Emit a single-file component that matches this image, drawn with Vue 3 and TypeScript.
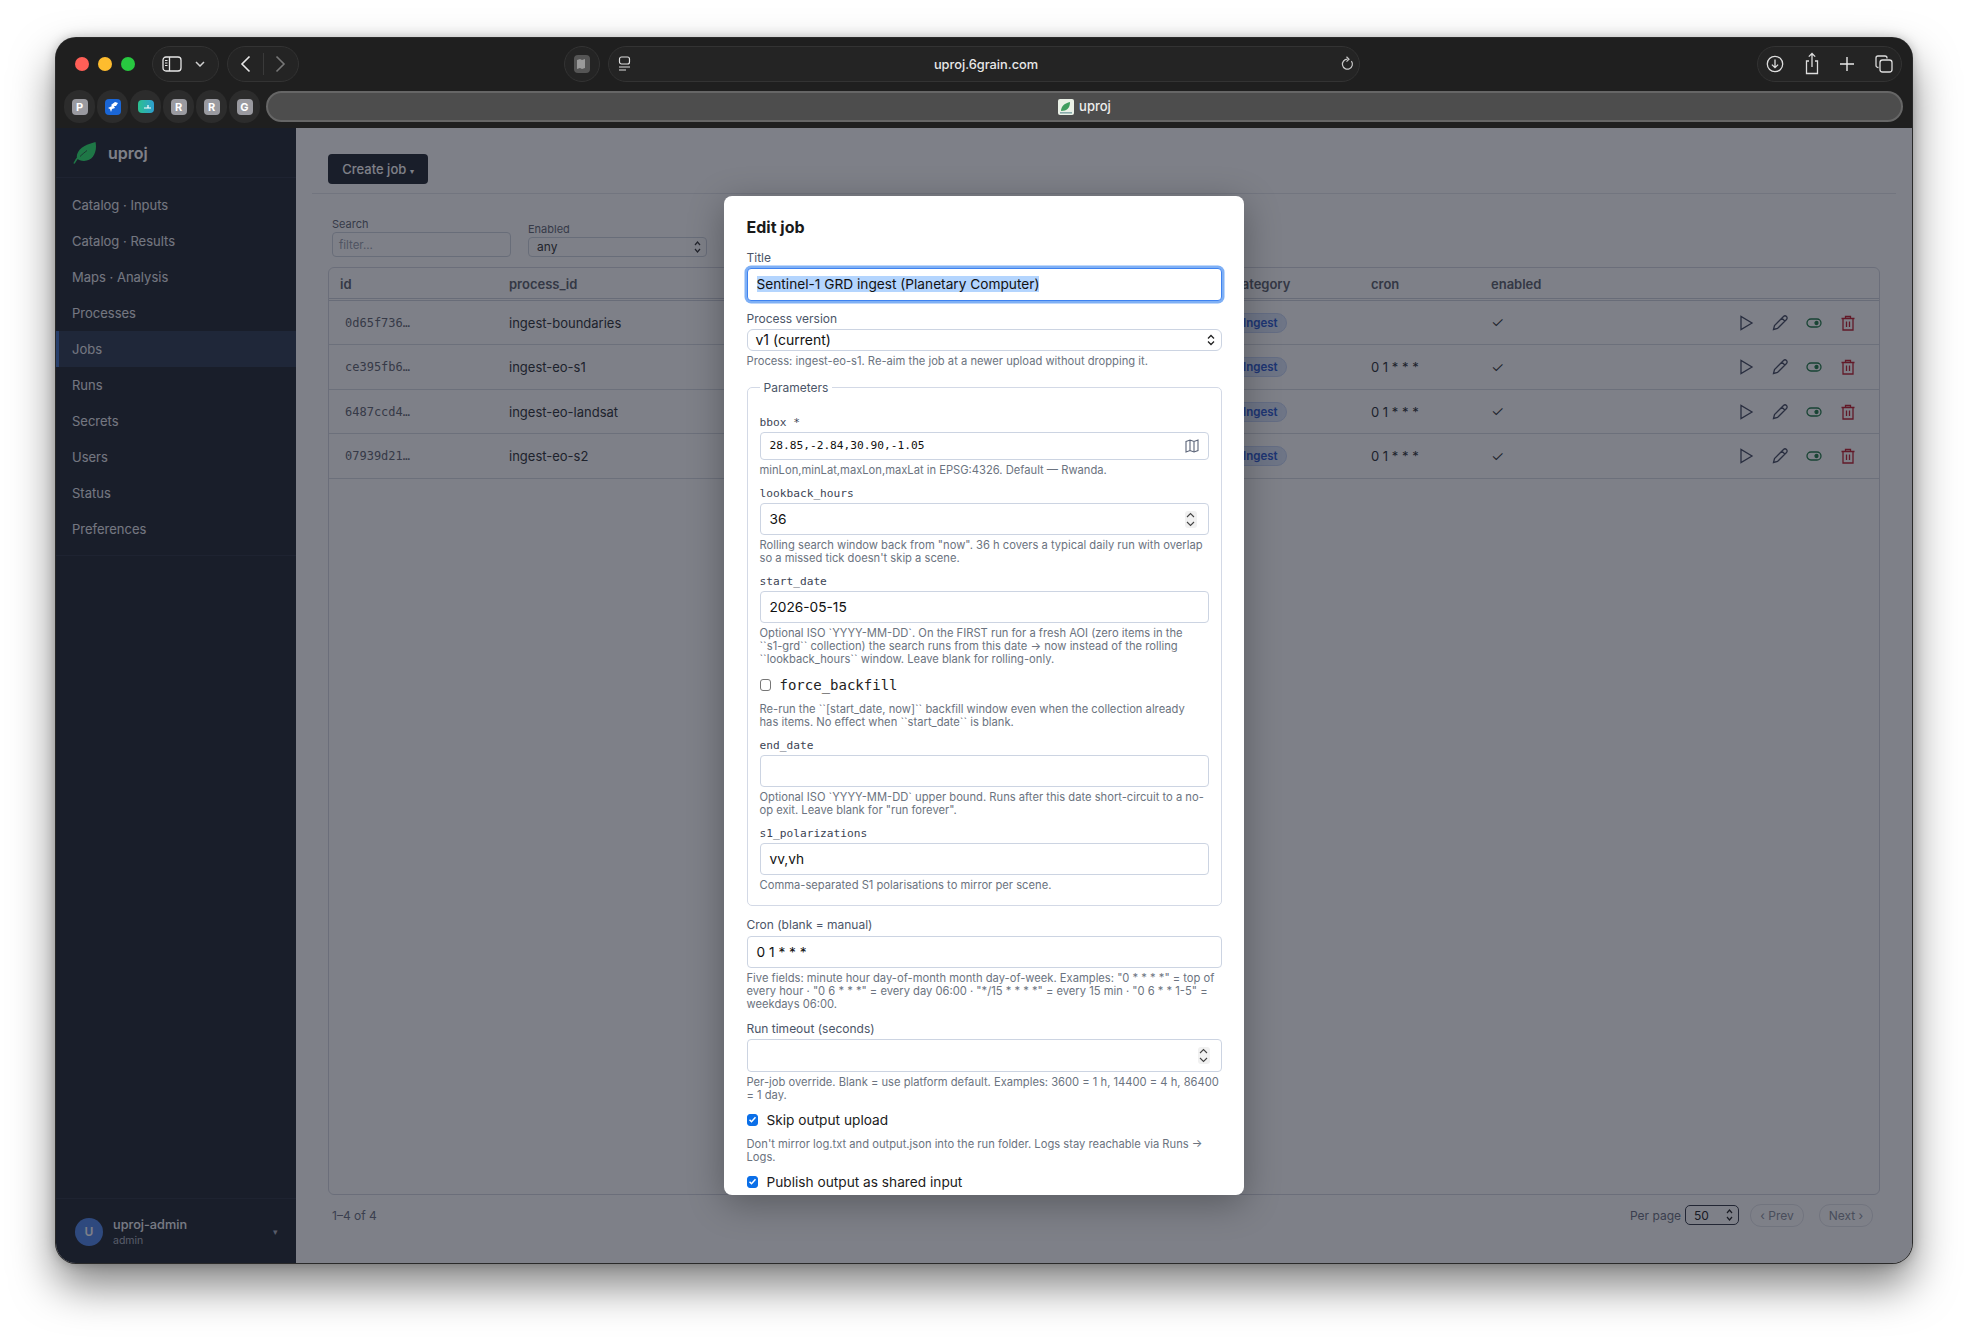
<script setup lang="ts">
interface Job { id: string; process: string; cron: string }
const nav: string[] = ['Catalog · Inputs', 'Catalog · Results', 'Maps · Analysis', 'Processes', 'Jobs', 'Runs', 'Secrets', 'Users', 'Status', 'Preferences']
const jobs: Job[] = [
  { id: '0d65f736…', process: 'ingest-boundaries', cron: '' },
  { id: 'ce395fb6…', process: 'ingest-eo-s1', cron: '0 1 * * *' },
  { id: '6487ccd4…', process: 'ingest-eo-landsat', cron: '0 1 * * *' },
  { id: '07939d21…', process: 'ingest-eo-s2', cron: '0 1 * * *' },
]
const tabs: string[] = ['P', '', '', 'R', 'R', 'G']
</script>

<template>
  <div class="page">
    <div class="window">
      <header class="chrome">
        <div class="row-top">
          <div class="lights"><i class="l red"></i><i class="l yellow"></i><i class="l green"></i></div>
          <div class="pill pill-side">
            <svg width="20" height="16" viewBox="0 0 20 16" fill="none" stroke="#e6e6e6" stroke-width="1.3"><rect x="1" y="1" width="18" height="14" rx="3"/><path d="M7.5 1v14"/><path d="M3 4.5h2.5M3 7h2.5M3 9.5h2.5" stroke-width="1"/></svg>
            <svg width="10" height="6" viewBox="0 0 10 6" fill="none" stroke="#d0d0d0" stroke-width="1.5"><path d="M1 1l4 4 4-4"/></svg>
          </div>
          <div class="pill pill-nav">
            <svg width="11" height="18" viewBox="0 0 11 18" fill="none" stroke="#e8e8e8" stroke-width="1.6"><path d="M9.5 1.5L2 9l7.5 7.5"/></svg>
            <span class="sep"></span>
            <svg width="11" height="18" viewBox="0 0 11 18" fill="none" stroke="#777" stroke-width="1.6"><path d="M1.5 1.5L9 9l-7.5 7.5"/></svg>
          </div>
          <div class="pill pill-reader"><span class="reader-ico"><svg width="10" height="10" viewBox="0 0 10 10" fill="#9a9a9a"><path d="M0 1l3-1 2 1 3-1v9l-3 1-2-1-3 1z"/></svg></span></div>
          <div class="pill address">
            <svg class="addr-left" width="13" height="16" viewBox="0 0 13 16" fill="none" stroke="#ddd" stroke-width="1.2"><rect x="1.5" y="1" width="10" height="7" rx="2"/><path d="M1 11h11M1 14h7"/></svg>
            <span class="url">uproj.6grain.com</span>
            <svg class="addr-right" width="13" height="16" viewBox="0 0 13 16" fill="none" stroke="#c8c8c8" stroke-width="1.2"><path d="M10.4 5.2A5 5 0 1 1 6.5 3.2"/><path d="M5.5 0.8L8 3.2 5.5 5.6" /></svg>
          </div>
          <div class="pill tools">
            <svg width="18" height="18" viewBox="0 0 18 18" fill="none" stroke="#ddd" stroke-width="1.3"><circle cx="9" cy="9" r="7.7"/><path d="M9 4.5v8M5.9 9.6L9 12.7l3.1-3.1"/></svg>
            <svg width="16" height="24" viewBox="0 0 16 24" fill="none" stroke="#ddd" stroke-width="1.3"><path d="M5 9H2.5v12.5h11V9H11"/><path d="M8 15V1.5M4.8 4.6L8 1.5l3.2 3.1"/></svg>
            <svg width="16" height="16" viewBox="0 0 16 16" fill="none" stroke="#e8e8e8" stroke-width="1.4"><path d="M8 1v14M1 8h14"/></svg>
            <svg width="18" height="18" viewBox="0 0 18 18" fill="none" stroke="#ddd" stroke-width="1.3"><rect x="5" y="5" width="12" height="12" rx="2.5"/><path d="M3.5 12.5H3a2 2 0 0 1-2-2V3a2 2 0 0 1 2-2h7a2 2 0 0 1 2 2v.5"/></svg>
          </div>
        </div>
        <div class="row-tabs">
          <div v-for="(t, i) in tabs" :key="i" class="tab">
            <span class="fav" :class="{ blue: i === 1, teal: i === 2 }">{{ t }}<svg v-if="i === 1" width="12" height="12" viewBox="0 0 12 12" fill="#fff"><path d="M1 7l4-2-1-1 4-3 3 1-2 3h-2l1 2-3 1-1 3-1-3z"/></svg><svg v-if="i === 2" width="12" height="8" viewBox="0 0 12 8" fill="none" stroke="#fff" stroke-width="1.2"><path d="M4 5h7M8 2v3"/></svg></span>
          </div>
          <div class="tabbar">
            <svg width="16" height="16" viewBox="0 0 16 16"><rect width="16" height="16" rx="2" fill="#e9f0e6"/><path d="M3 12c0-5 4-8 9-9 0 6-3 9-9 9z" fill="#3f9d5f"/><rect x="2" y="13" width="12" height="1.6" fill="#8aa"/></svg>
            <span>uproj</span>
          </div>
        </div>
      </header>

      <div class="app">
        <aside class="sidebar">
          <div class="brand">
            <svg width="24" height="22" viewBox="0 0 24 22"><path d="M22.500 0C24.500 10 20 19 11 19 8 19 5.500 18 4 16.500 2.500 9 10 3 22.500 0z" fill="#2cec6e"/><path d="M1 21.500C4 15.500 8 11.500 14 8.500" fill="none" stroke="#2cec6e" stroke-width="1.500"/><path d="M7 14.500C9.500 12 11.500 10.500 14 8.500" fill="none" stroke="#21262f" stroke-width=".7"/></svg>
            <span>uproj</span>
          </div>
          <nav class="nav">
            <a v-for="n in nav" :key="n" class="nav-item" :class="{ active: n === 'Jobs' }">{{ n }}</a>
          </nav>
          <div class="user">
            <span class="avatar">U</span>
            <div class="who"><div class="name">uproj-admin</div><div class="role">admin</div></div>
            <span class="caret">▾</span>
          </div>
        </aside>

        <main class="main">
          <div class="head"><button class="create">Create job <small>▾</small></button></div>
          <div class="filters">
            <div class="filter">
              <div class="f-label">Search</div>
              <div class="f-input">filter...</div>
            </div>
            <div class="filter">
              <div class="f-label">Enabled</div>
              <div class="f-select">any
                <svg width="7" height="12" viewBox="0 0 7 12" fill="none" stroke="#333" stroke-width="1.2"><path d="M1 4l2.500-3L6 4M1 8l2.500 3L6 8"/></svg>
              </div>
            </div>
          </div>
          <section class="table">
            <div class="tr th">
              <span>id</span><span>process_id</span><span>category</span><span>cron</span><span>enabled</span><span></span>
            </div>
            <div v-for="j in jobs" :key="j.id" class="tr">
              <span class="mono">{{ j.id }}</span>
              <span>{{ j.process }}</span>
              <span><b class="badge">Ingest</b></span>
              <span>{{ j.cron }}</span>
              <span class="check">✓</span>
              <span class="actions">
                <svg width="16" height="16" viewBox="0 0 16 16" fill="none" stroke="#444b60" stroke-width="1.300"><path d="M3 1.500v13L14 8z"/></svg>
                <svg width="16" height="16" viewBox="0 0 16 16" fill="none" stroke="#444b60" stroke-width="1.300"><path d="M1.500 14.500l1-4L11.500 1.500a1.800 1.800 0 0 1 3 3L5.500 13.500zM10 3.200l2.800 2.800"/></svg>
                <svg width="16" height="16" viewBox="0 0 16 16" fill="none" stroke="#1f7a45" stroke-width="1.300"><rect x="1" y="4" width="14" height="8" rx="4"/><circle cx="10.500" cy="8" r="1.500" fill="#1f7a45"/></svg>
                <svg width="16" height="16" viewBox="0 0 16 16" fill="none" stroke="#c01c2c" stroke-width="1.300"><path d="M1.500 3.500h13M5.500 3.500V1.500h5v2M3 3.500v11.500h10V3.500M6.500 6.500v5.500M9.500 6.500v5.500"/></svg>
              </span>
            </div>
          </section>
          <footer class="pager">
            <span class="count">1–4 of 4</span>
            <span class="per">Per page</span>
            <div class="per-select">50
              <svg width="7" height="12" viewBox="0 0 7 12" fill="none" stroke="#222" stroke-width="1.2"><path d="M1 4l2.500-3L6 4M1 8l2.500 3L6 8"/></svg>
            </div>
            <button class="pg prev">‹ Prev</button>
            <button class="pg">Next ›</button>
          </footer>
        </main>

        <div class="overlay">
          <div class="modal">
            <h2>Edit job</h2>
            <div class="field title-field">
              <div class="lbl">Title</div>
              <div class="input focus"><span class="sel">Sentinel-1 GRD ingest (Planetary Computer)</span></div>
            </div>
            <div class="field">
              <div class="lbl">Process version</div>
              <div class="input select">v1 (current)
                <svg class="ud" width="8" height="12" viewBox="0 0 8 12" fill="none" stroke="#222" stroke-width="1.300"><path d="M1 4.500L4 1.500l3 3M1 7.500l3 3 3-3"/></svg>
              </div>
              <div class="hint">Process: ingest-eo-s1. Re-aim the job at a newer upload without dropping it.</div>
            </div>
            <fieldset class="params">
              <legend>Parameters</legend>
              <div class="pf">
                <div class="mlbl">bbox *</div>
                <div class="input bbox">28.85,-2.84,30.90,-1.05
                  <svg class="map" width="14" height="14" viewBox="0 0 14 14" fill="none" stroke="#5b6478" stroke-width="1.100"><path d="M1 2.500l4-1.500 4 1.500 4-1.500v10.500l-4 1.500-4-1.500-4 1.500zM5 1v10.500M9 2.500V13"/></svg>
                </div>
                <div class="hint">minLon,minLat,maxLon,maxLat in EPSG:4326. Default — Rwanda.</div>
              </div>
              <div class="pf">
                <div class="mlbl">lookback_hours</div>
                <div class="input">36
                  <span class="spin"><svg width="9" height="15" viewBox="0 0 9 15" fill="none" stroke="#444" stroke-width="1.100"><path d="M1 5l3.500-3.500L8 5M1 10l3.500 3.500L8 10"/></svg></span>
                </div>
                <div class="hint">Rolling search window back from "now". 36 h covers a typical daily run with overlap so a missed tick doesn't skip a scene.</div>
              </div>
              <div class="pf">
                <div class="mlbl">start_date</div>
                <div class="input">2026-05-15</div>
                <div class="hint">Optional ISO `YYYY-MM-DD`. On the FIRST run for a fresh AOI (zero items in the ``s1-grd`` collection) the search runs from this date → now instead of the rolling ``lookback_hours`` window. Leave blank for rolling-only.</div>
              </div>
              <div class="pf">
                <div class="checkrow"><span class="box"></span><span class="mcheck">force_backfill</span></div>
                <div class="hint after">Re-run the ``[start_date, now]`` backfill window even when the collection already<br>has items. No effect when ``start_date`` is blank.</div>
              </div>
              <div class="pf">
                <div class="mlbl">end_date</div>
                <div class="input"></div>
                <div class="hint">Optional ISO `YYYY-MM-DD` upper bound. Runs after this date short-circuit to a no-op exit. Leave blank for "run forever".</div>
              </div>
              <div class="pf">
                <div class="mlbl">s1_polarizations</div>
                <div class="input">vv,vh</div>
                <div class="hint">Comma-separated S1 polarisations to mirror per scene.</div>
              </div>
            </fieldset>
            <div class="field">
              <div class="lbl">Cron (blank = manual)</div>
              <div class="input">0 1 * * *</div>
              <div class="hint">Five fields: minute hour day-of-month month day-of-week. Examples: "0 * * * *" = top of every hour · "0 6 * * *" = every day 06:00 · "*/15 * * * *" = every 15 min · "0 6 * * 1-5" = weekdays 06:00.</div>
            </div>
            <div class="field timeout">
              <div class="lbl">Run timeout (seconds)</div>
              <div class="input">
                <span class="spin"><svg width="9" height="15" viewBox="0 0 9 15" fill="none" stroke="#444" stroke-width="1.100"><path d="M1 5l3.500-3.500L8 5M1 10l3.500 3.500L8 10"/></svg></span>
              </div>
              <div class="hint">Per-job override. Blank = use platform default. Examples: 3600 = 1 h, 14400 = 4 h, 86400 = 1 day.</div>
            </div>
            <div class="checkrow">
              <span class="box on"><svg width="9" height="9" viewBox="0 0 9 9" fill="none" stroke="#fff" stroke-width="1.500"><path d="M1.500 4.700l2 2 4-4.500"/></svg></span>
              <span class="tcheck">Skip output upload</span>
            </div>
            <div class="hint after">Don't mirror log.txt and output.json into the run folder. Logs stay reachable via Runs → Logs.</div>
            <div class="checkrow last">
              <span class="box on"><svg width="9" height="9" viewBox="0 0 9 9" fill="none" stroke="#fff" stroke-width="1.500"><path d="M1.500 4.700l2 2 4-4.500"/></svg></span>
              <span class="tcheck">Publish output as shared input</span>
            </div>
          </div>
        </div>
      </div>
    </div>
  </div>
</template>

<style>
html, body { margin: 0; background: #fff; }
</style>

<style scoped>
* { box-sizing: border-box; }
.page { width: 1968px; height: 1337px; padding: 38px 56px 74px; font-family: Inter, "Liberation Sans", sans-serif; background: #fff; overflow: hidden; }
.window { height: 100%; border-radius: 20px; overflow: hidden; display: flex; flex-direction: column; box-shadow: 0 0 0 1px #2a2a2a, 0 22px 44px rgba(0,0,0,.5), 0 0 12px rgba(0,0,0,.25); background: #1f1f1f; }
.chrome { height: 90px; flex: none; background: #1f1f1f; color: #ddd; padding-top: 8px; }
.row-top { display: flex; align-items: center; height: 36px; padding-right: 10px; }
.lights { display: flex; gap: 9px; margin-left: 19px; margin-right: 17px; }
.l { width: 14px; height: 14px; border-radius: 50%; display: block; }
.red { background: #ff5f57; } .yellow { background: #febc2e; } .green { background: #28c840; }
.pill { height: 36px; border-radius: 18px; border: 1px solid #333; display: flex; align-items: center; background: #242424; }
.pill-side { width: 67px; padding: 0 13px 0 9px; justify-content: space-between; margin-right: 8px; }
.pill-nav { width: 72px; justify-content: space-between; padding: 0 12px; }
.sep { width: 1px; height: 22px; background: #3a3a3a; }
.pill-reader { width: 36px; justify-content: center; margin-left: 265px; margin-right: 8px; }
.reader-ico { width: 16px; height: 18px; border-radius: 4px; background: #555; display: flex; align-items: center; justify-content: center; }
.address { width: 752px; position: relative; justify-content: space-between; padding: 0 5px 0 9px; }
.url { font-size: 12.800px; font-weight: 500; color: #e8e8e8; }
.tools { width: 145px; margin-left: auto; padding: 0 8px; justify-content: space-between; }
.row-tabs { display: flex; align-items: center; margin-top: 8px; height: 33px; padding-left: 8px; }
.tab { width: 31px; height: 33px; margin-right: 2px; border-radius: 16px; background: #2c2c2c; display: flex; align-items: center; justify-content: center; }
.fav { width: 16px; height: 16px; border-radius: 4px; background: #9a9aa0; color: #fff; font-size: 11px; font-weight: 700; display: flex; align-items: center; justify-content: center; }
.fav.blue { background: #1a66d6; }
.fav.teal { background: linear-gradient(90deg, #2bc08f, #2e9fd0); height: 13px; }
.tabbar { margin-left: 4px; width: 1637px; height: 31px; border-radius: 16px; background: #4d4d4d; border: 2px solid #666; display: flex; align-items: center; justify-content: center; gap: 5px; font-size: 13px; color: #eee; font-weight: 500; }
.tabbar span { line-height: 1; }

.app { flex: 1; display: flex; position: relative; background: #fff; min-height: 0; }
.sidebar { width: 240px; flex: none; background: #21262f; color: #fff; display: flex; flex-direction: column; }
.brand { height: 50px; display: flex; align-items: center; gap: 11px; padding-left: 17px; border-bottom: 1px solid #2c323e; font-size: 16px; font-weight: 600; }
.nav { padding: 8.500px 0 8px; border-bottom: 1px solid #2c323e; }
.nav-item { height: 36px; display: flex; align-items: center; padding-left: 16px; font-size: 13px; color: #e8ebf0; }
.nav-item.active { background: #2e3a50; box-shadow: inset 3px 0 0 #3f6fbf; }
.user { margin-top: auto; height: 65px; border-top: 1px solid #2c323e; display: flex; align-items: center; padding: 0 18px 0 19px; gap: 10px; }
.avatar { width: 28px; height: 28px; border-radius: 50%; background: #4f86e8; color: #fff; font-size: 12px; font-weight: 600; display: flex; align-items: center; justify-content: center; margin-top: 1px; }
.who { flex: 1; margin-top: 2px; }
.name { font-size: 12.700px; line-height: 16px; color: #f2f4f8; font-weight: 500; }
.role { font-size: 10.500px; line-height: 13px; color: #aab0bc; margin-top: 1px; }
.caret { font-size: 9px; color: #aab0bc; margin-top: 1px; }

.main { flex: 1; display: flex; flex-direction: column; padding: 0 16px 36px; min-width: 0; }
.head { height: 66px; padding: 26px 16px 0; border-bottom: 1px solid #e4e6ea; flex: none; }
.create { height: 30px; width: 100px; border: 0; border-radius: 4px; background: #21262f; color: #fff; font: 500 13px Inter, sans-serif; padding: 0; }
.create small { font-size: 8px; }
.filters { display: flex; align-items: flex-end; gap: 17px; padding: 23px 20px 0; height: 73px; flex: none; }
.filter { width: 179px; margin-bottom: 10px; }
.f-label { font-size: 11px; line-height: 14px; color: #5f6672; margin-bottom: 1px; }
.f-input { height: 25px; border: 1px solid #cfd4dd; border-radius: 4px; font-size: 11.500px; line-height: 25px; color: #9aa0ac; padding-left: 6px; }
.f-select { height: 20px; border: 1px solid #cfd4dd; border-radius: 4px; font-size: 12px; line-height: 18px; color: #333; padding: 0 5px 0 8px; display: flex; justify-content: space-between; align-items: center; }
.table { flex: 1; margin: 0 16px; border: 1px solid #d5d8e0; border-radius: 6px; min-height: 0; }
.tr { display: grid; grid-template-columns: 169px 725px 137px 120px 100px 1fr; align-items: center; height: 44.500px; padding: 1px 0 0 11px; border-bottom: 1px solid #d8dbe2; font-size: 13px; color: #2c2f33; }
.th { height: 32.500px; padding-top: 2px; border-bottom: 3px double #cfd3dc; font-weight: 600; color: #5b5f6a; }
.mono { font-family: "DejaVu Sans Mono", monospace; font-size: 12px; color: #5f6470; padding-left: 5px; }
.badge { display: inline-flex; align-items: center; height: 20px; padding: 0 8px; border-radius: 10px; background: #dbe6fb; border: 1px solid #c6d6f5; color: #2b5ad0; font-size: 11.500px; font-weight: 600; }
.check { font-size: 15px; font-weight: 300; line-height: 1; }
.actions { display: flex; justify-content: flex-end; gap: 18px; padding-right: 23px; }
.pager { display: flex; align-items: center; height: 24px; margin: 8px 23px 0 20px; font-size: 12px; color: #6a7080; flex: none; }
.count { margin-right: auto; }
.per { margin-right: 4px; }
.per-select { width: 54px; height: 20px; border: 1px solid #333845; border-radius: 5px; color: #222; padding: 0 5px 0 8px; display: flex; align-items: center; justify-content: space-between; }
.pg { height: 23px; width: 54px; margin-left: 11px; border: 1px solid #e2e4e9; border-radius: 11px; background: transparent; font: 12px Inter, sans-serif; color: #8a8f9c; padding: 0; }
.pg.prev { margin-right: 4px; }

.overlay { position: absolute; inset: 0; background: rgba(20,24,38,.55); display: flex; justify-content: center; align-items: center; }
.modal { width: 520px; height: 999px; background: #fff; border-radius: 8px; padding: 21px 22.500px 0; overflow: hidden; box-shadow: 0 8px 36px rgba(0,0,0,.3); color: #111; }
h2 { margin: 0 0 13.500px; font-size: 16px; line-height: 20px; font-weight: 700; color: #1a1a1a; }
.field { margin-bottom: 10.500px; }
.title-field { margin-bottom: 10.700px; }
.lbl { font-size: 12px; line-height: 14px; color: #4b5568; margin-bottom: 3.500px; }
.mlbl { font-family: "DejaVu Sans Mono", monospace; font-size: 11.200px; line-height: 14px; color: #3c4454; margin-bottom: 2px; }
.input { position: relative; height: 32.500px; border: 1px solid #ccd4e2; border-radius: 4px; background: #fff; font-size: 13.700px; line-height: 30.500px; padding-left: 9px; color: #111; }
.focus { height: 33px; border-color: #3f83f0; box-shadow: 0 0 0 2.500px #7fb0f5; line-height: 31px; }
.sel { background: #b4d5fe; }
.select { height: 22.200px; font-size: 14px; line-height: 20.200px; padding-left: 8px; border-radius: 6px; }
.ud { position: absolute; right: 6px; top: 4px; }
.hint { font-size: 11.200px; line-height: 13px; color: #6b7380; margin-top: 4px; }
.hint.after { margin-top: 9.500px; margin-bottom: 8.500px; }
.params { margin: 12.200px 0 12.400px; padding: 21px 12px 3.300px; border: 1px solid #d3d9e6; border-radius: 5px; min-width: 0; }
legend { font-size: 12px; line-height: 14px; color: #4b5568; padding: 0 4px; }
.pf { margin-bottom: 9.500px; }
.pf .hint.after { margin-bottom: 0; }
.bbox { height: 28.700px; font-family: "DejaVu Sans Mono", monospace; font-size: 11.200px; line-height: 26.700px; }
.map { position: absolute; right: 9px; top: 6.500px; }
.spin { position: absolute; right: 11px; top: 7px; width: 12px; height: 17px; background: #f1f1f1; border-radius: 3px; display: flex; align-items: center; justify-content: center; }
.checkrow { display: flex; align-items: center; height: 18px; }
.timeout { margin-bottom: 9px; }
.box { width: 11.500px; height: 11.500px; border-radius: 3px; border: 1px solid #767676; display: flex; align-items: center; justify-content: center; background: #fff; flex: none; }
.box.on { background: #0b6fe8; border-color: #0b6fe8; }
.mcheck { font-family: "DejaVu Sans Mono", monospace; font-size: 14px; margin-left: 8.500px; color: #222; }
.tcheck { font-size: 13.700px; margin-left: 8.500px; color: #1b1b1b; }
</style>
